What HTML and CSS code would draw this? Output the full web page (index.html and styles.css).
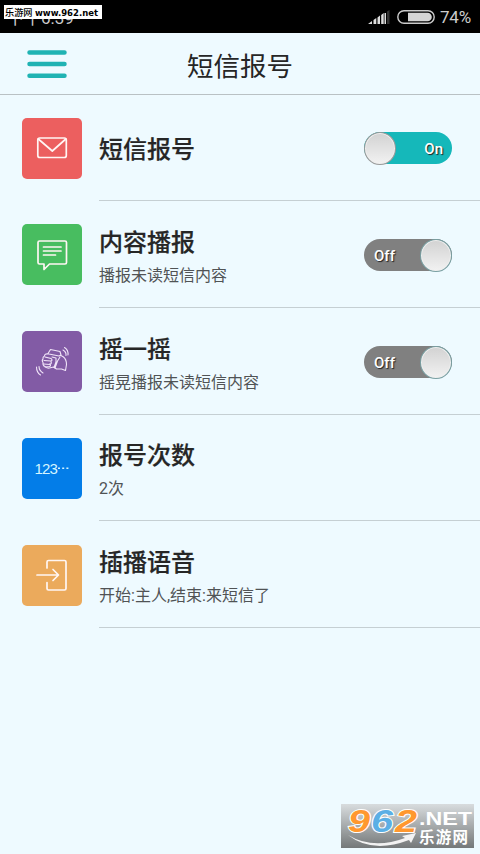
FILE: index.html
```html
<!DOCTYPE html>
<html lang="zh-CN">
<head>
<meta charset="utf-8">
<title>短信报号</title>
<link rel="stylesheet" href="styles.css">
</head>
<body>
<div class="status">
  <span class="time">下午6:39</span>
  <span class="site-tag"><span class="site-name">乐游网</span><svg class="site-url" width="66" height="14"><text x="0" y="11" textLength="63" lengthAdjust="spacingAndGlyphs">www.962.net</text></svg></span>
  <svg class="signal" width="22" height="15" viewBox="0 0 22 15"><path d="M0 14h4v-3zM5.500 14v-4l2.800-2v6zM9.500 14V7.500l2.500-2V14zM13.200 14V5l2.500-2v11z" fill="#ddd"/><path d="M16.500 14V3h1.500v11z" fill="#ddd"/><path d="M19 14V1.500L21.500 0v14z" fill="#333"/></svg>
  <svg class="battery" width="38" height="14" viewBox="0 0 38 14"><rect x=".8" y=".8" width="36.400" height="12.400" rx="6.200" fill="none" stroke="#ccc" stroke-width="1.400"/><path d="M11 2.700h19.500a4.300 4.300 0 0 1 0 8.600H11z" fill="#d5d5d5"/></svg>
  <span class="percent">74%</span>
</div>
<header class="bar">
  <svg class="menu" width="40" height="29" viewBox="0 0 40 29"><path d="M2.500 2.500h35M2.500 14h35M2.500 25.700h35" stroke="#20b3b3" stroke-width="4.500" stroke-linecap="round"/></svg>
  <h1>短信报号</h1>
</header>
<main class="list">
  <section class="row">
    <div class="icon red"><svg width="61" height="61" viewBox="0 0 61 61"><rect x="16.800" y="20" width="28.500" height="19.500" rx="2"/><path d="M17.300 21L31.300 33L44.800 21"/></svg></div>
    <div class="body"><div class="texts single"><h2>短信报号</h2></div>
    <div class="switch on"><span class="knob"></span><span class="label">On</span></div></div>
  </section>
  <section class="row">
    <div class="icon green"><svg width="61" height="61" viewBox="0 0 61 61"><path d="M18.500 17h25.500q1.500 0 1.500 1.500v20q0 1.500-1.500 1.500H28.500l-5.500 5.500v-5.500h-4.500q-1.500 0-1.500-1.500v-20q0-1.500 1.500-1.500z"/><path d="M22.500 23h17.500M22.500 27h17.500M22.500 31h12"/></svg></div>
    <div class="body"><div class="texts"><h2>内容播报</h2><p>播报未读短信内容</p></div>
    <div class="switch off"><span class="label">Off</span><span class="knob"></span></div></div>
  </section>
  <section class="row">
    <div class="icon purple"><svg class="fine" width="61" height="61" viewBox="0 0 61 61"><path d="M27 22.500l2.500-4 9.500 2 1 3.500-2 1-10-2zM27 23q-3.500-.500-3.500 2-2 1-1.500 3-1.500 1.500 0 3.500-.500 3 2 4 1.500 2 4.500 1.500l4-1 3 2h5l4 1.500 1-6q0-5-3-7.500L40 24.500"/><path d="M24 26l6 1.500q2 1.500 0 2.500l-7-.500M22.500 33l6.500.500q2-1 1-3M24 36l4.500-.500q2-1 0-2.500M31 26l4 1 0 4-2 5.500M34 37l2.500-7 2.500-4"/><path d="M42 19q3.500 2 3 5.500M43.500 16.500q4 2.500 3.500 7.500M18 35.500q0 4 4 6.500M15.500 36q0 5.500 4 8"/></svg></div>
    <div class="body"><div class="texts"><h2>摇一摇</h2><p>摇晃播报未读短信内容</p></div>
    <div class="switch off"><span class="label">Off</span><span class="knob"></span></div></div>
  </section>
  <section class="row">
    <div class="icon blue"><span class="digits">123</span><svg class="dots" width="11" height="3"><path d="M0 .500h2v1.500H0zM4.200 .500h2v1.500h-2zM8.400 .500h2v1.500h-2z"/></svg></div>
    <div class="body"><div class="texts"><h2>报号次数</h2><p>2次</p></div></div>
  </section>
  <section class="row">
    <div class="icon orange"><svg width="61" height="61" viewBox="0 0 61 61"><path d="M26 23v-6q0-1.500 1.500-1.500h16q1.500 0 1.500 1.500v26.500q0 1.500-1.500 1.500h-16q-1.500 0-1.500-1.500v-6M16 30H37M32 24.500l5.500 5.500L32 35.500"/></svg></div>
    <div class="body"><div class="texts"><h2>插播语音</h2><p>开始:主人,结束:来短信了</p></div></div>
  </section>
</main>
<svg class="watermark" width="133" height="44" viewBox="0 0 133 44">
  <defs><linearGradient id="shade" x1="0" y1="0" x2="0" y2="1"><stop offset="0" stop-color="#d8dcde"/><stop offset="1" stop-color="#747879"/></linearGradient></defs>
  <rect width="133" height="44" fill="url(#shade)"/>
  <path d="M7 31q25 15 57 3l-3-2 14-3-5 10-2-3Q31 50 7 31z" fill="#f2f2f2"/>
  <g class="brand"><text x="7" y="28" textLength="22" lengthAdjust="spacingAndGlyphs" fill="#ff982f">9</text><text x="30" y="28" textLength="22" lengthAdjust="spacingAndGlyphs" fill="#5bafe5">6</text><text x="54" y="28" textLength="22" lengthAdjust="spacingAndGlyphs" fill="#ff982f">2</text></g>
  <text class="net" x="78" y="21" textLength="53" lengthAdjust="spacingAndGlyphs">.NET</text>
  <text class="cn" x="78" y="39" textLength="49">乐游网</text>
</svg>
</body>
</html>
```
FILE: styles.css
```css
* { box-sizing: border-box; }
body {
  margin: 0;
  height: 854px;
  overflow: hidden;
  position: relative;
  background: #eefaff;
  color: #262626;
  font-family: Roboto, "Noto Sans CJK SC", sans-serif;
}
h1, h2, p { margin: 0; font-weight: 400; }
.status {
  position: relative;
  display: flex;
  align-items: center;
  height: 33px;
  padding: 1px 8px 0 7px;
  background: #000;
  color: #ccc;
}
.time { font-size: 17px; line-height: 24px; margin-right: auto; padding-top: 1px; }
.site-tag {
  position: absolute;
  left: 4px;
  top: 5px;
  width: 98px;
  height: 14px;
  display: flex;
  background: #fff;
  color: #000;
}
.site-name { width: 31px; font: 500 9.200px/15px "Noto Sans CJK SC", sans-serif; padding-left: 1px; white-space: nowrap; }
.site-url { font: bold 9.500px "DejaVu Sans", sans-serif; }
.signal { margin: 0 7px 0 0; }
.battery { margin-right: 5px; }
.percent { font-size: 17px; width: 32px; white-space: nowrap; letter-spacing: -.2px; }
.bar {
  position: relative;
  display: flex;
  align-items: center;
  justify-content: center;
  height: 62px;
  border-bottom: 1px solid #b9c1c4;
}
.menu { position: absolute; left: 27px; top: 17px; }
h1 { font-size: 26.500px; line-height: 40px; padding-top: 6px; }
.row { display: flex; height: 107px; padding-left: 21.500px; align-items: flex-end; }
.row:nth-child(1), .row:nth-child(4) { height: 106px; }
.icon {
  width: 60.500px;
  height: 61px;
  margin: 0 17px 22px 0;
  border-radius: 5px;
  display: flex;
  align-items: center;
  justify-content: center;
  flex: none;
}
.icon svg { flex: none; fill: none; stroke: #fff6f4; stroke-width: 1.700; stroke-linejoin: round; stroke-linecap: round; }
.icon svg.fine { stroke: #f0e4f8; stroke-width: 1.100; }
.red { background: #ec5f5f; }
.green { background: #48bd60; }
.purple { background: #825ba5; }
.purple, .green { margin-bottom: 22.600px; }
.blue { background: #037de8; color: #d5f5ff; }
.orange { background: #ebaa5c; }
.digits { font: 15px "Liberation Sans", sans-serif; letter-spacing: -.8px; }
.icon .dots { fill: #d5f5ff; stroke: none; margin-left: 1px; }
.body {
  flex: 1;
  align-self: stretch;
  display: flex;
  justify-content: space-between;
  align-items: flex-end;
  border-bottom: 1px solid #c5cfd3;
}
.texts { padding-bottom: 19px; }
.single { padding-bottom: 32px; }
h2 { font-size: 24px; line-height: 36px; font-weight: 500; -webkit-text-stroke: .2px currentColor; }
p { font-size: 16px; line-height: 24px; margin-top: 3px; color: #505355; }
.switch {
  width: 88px;
  height: 32px;
  margin: 0 28px 36px 0;
  border-radius: 16px;
  display: flex;
  align-items: center;
  justify-content: space-between;
  color: #fff;
}
.on { background: #15b8ba; padding-right: 9px; }
.off { background: #808080; padding-left: 10px; }
.label { font-size: 15px; font-weight: 500; text-shadow: 1px 1px 1px #222; padding-top: 1px; }
.knob {
  width: 32px;
  height: 33px;
  border-radius: 50%;
  border: 1px solid #999;
  background: linear-gradient(#d2d2d2, #f2f2f2);
  box-shadow: inset 0 0 0 1px #eee;
}
.off .knob { border-color: #799fa2; }
.watermark { position: absolute; left: 341px; top: 804px; }
.brand { font: italic bold 32px "Liberation Sans", sans-serif; stroke: #fff; stroke-width: 2px; paint-order: stroke; }
.net { font: bold 19px "Liberation Sans", sans-serif; fill: #fff; }
.cn { font: bold 15.500px "Noto Sans CJK SC", sans-serif; fill: #fff; }
```
